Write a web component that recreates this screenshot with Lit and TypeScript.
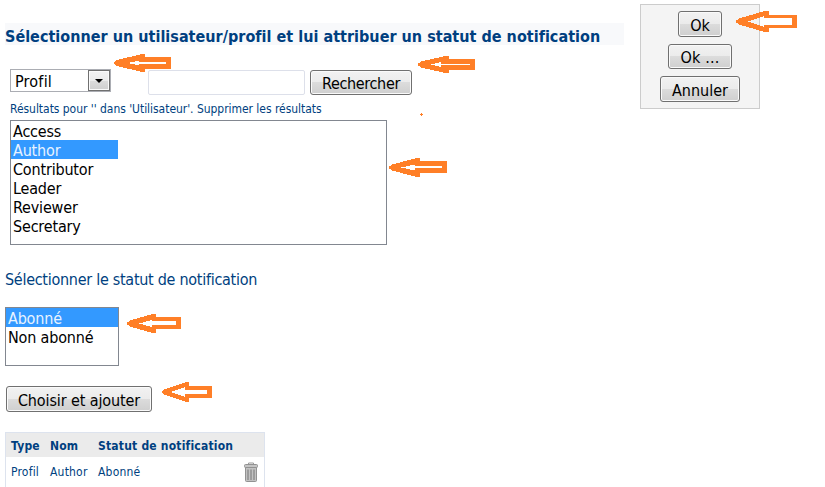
import { LitElement, html, css, svg } from "lit";
import { customElement, property } from "lit/decorators.js";
import { classMap } from "lit/directives/class-map.js";

const uiFont = css`"DejaVu Sans Condensed", "DejaVu Sans", sans-serif`;

@customElement("ui-button")
class UiButton extends LitElement {
  static styles = css`
    :host { display: block; }
    button {
      display: block; box-sizing: border-box; width: 100%; height: 100%; margin: 0; padding: 3px 0 0;
      border: 1px solid #707070; border-radius: 3px; box-shadow: inset 0 0 0 1px #fafafa;
      background: linear-gradient(#f2f2f2 0, #ebebeb 50%, #dcdcdc 50%, #cfcfcf 100%);
      font: 16px/20px ${uiFont}; letter-spacing: inherit; color: #000; white-space: nowrap;
    }
  `;
  render() { return html`<button><slot></slot></button>`; }
}

@customElement("list-box")
class ListBox extends LitElement {
  @property({ attribute: false }) items: string[] = [];
  @property() selected = "";
  static styles = css`
    :host { display: block; box-sizing: border-box; border: 1px solid #828790; background: #fff; }
    .opt { height: 19px; font: 16px/22px ${uiFont}; letter-spacing: -0.18px; padding-left: 2px; color: #000; white-space: nowrap; }
    .on { background: #3399ff; color: #e8f3ff; width: var(--sel-width, auto); }
  `;
  render() {
    return this.items.map((i) => html`<div class=${classMap({ opt: true, on: i === this.selected })}><span>${i}</span></div>`);
  }
}

// tip x, tip y, head x, head right, top, bottom, shaft top, shaft bottom, right,
// inner tip x, inner top, inner bottom, slot top, slot bottom, inner head x
const arrows = [
  [114, 63, 141, 145, 54, 72, 57, 69, 171, 128, 60.5, 65.5, 62, 64, 139],
  [418, 64.5, 444, 449, 56, 73, 59, 70, 475, 431, 62, 67, 64, 65, 441],
  [389, 167.5, 416, 420, 158, 177, 161, 173, 447, 401, 164.5, 170.5, 166, 168, 415],
  [127, 323.5, 152, 156, 314, 333, 317, 329, 181, 139, 320, 327, 321, 325, 152],
  [162, 392, 186, 189, 382, 402, 386, 398, 212, 171, 387, 397, 390, 394, 185],
  [736, 21.5, 764, 769, 11, 32, 15, 28, 797, 748, 16, 27, 18, 25, 764],
];

@customElement("app-root")
class AppRoot extends LitElement {
  static styles = css`
    :host { display: block; position: relative; width: 825px; height: 487px; overflow: hidden; background: #fff; font-family: ${uiFont}; color: #003f80; }
    .page { display: flex; align-items: flex-start; }
    .main { width: 640px; box-sizing: border-box; padding: 23px 0 0 5px; }
    h1 { margin: 0; width: 619px; height: 22px; background: #f8f9fb; font-size: 16px; line-height: 27px; font-weight: bold; letter-spacing: 0.02px; white-space: nowrap; }
    .search { display: flex; margin: 24px 0 0 5px; height: 26px; }
    .select { display: flex; box-sizing: border-box; width: 101px; height: 23px; border: 1px solid #abadb3; color: #000; font-size: 16px; letter-spacing: 0.2px; line-height: 23px; }
    .select span { flex: 1; padding-left: 4px; }
    .drop { box-sizing: border-box; width: 22px; height: 21px; border: 1px solid #707070; box-shadow: inset 0 0 0 1px #fafafa; background: linear-gradient(#f2f2f2 0, #ebebeb 50%, #dcdcdc 50%, #cfcfcf 100%); display: flex; align-items: center; justify-content: center; }
    .drop i { border: 4px solid transparent; border-top-color: #000; border-bottom: 0; }
    input { box-sizing: border-box; width: 157px; height: 25px; margin: 1px 5px 0 37px; border: 1px solid #dde0ea; border-radius: 2px; background: #fff; }
    .b-search { width: 102px; height: 25px; margin-top: 1px; letter-spacing: -0.34px; }
    .result { margin: 7px 0 0 5px; height: 18px; font-size: 12px; line-height: 15px; letter-spacing: -0.04px; white-space: nowrap; }
    .profiles { width: 377px; height: 125px; margin-left: 5px; --sel-width: 105px; }
    .sub { margin-top: 24px; height: 38px; font-size: 16px; line-height: 22px; letter-spacing: -0.28px; white-space: nowrap; }
    .status { width: 114px; height: 59px; }
    .b-add { width: 146px; height: 26px; margin: 20px 0 20px 1px; letter-spacing: -0.11px; }
    .table { box-sizing: border-box; width: 260px; height: 60px; border: 1px solid #dde3ee; font-size: 12px; letter-spacing: 0.2px; }
    .row { display: grid; grid-template-columns: 39px 48px 141px 1fr; padding-left: 5px; height: 28px; line-height: 30px; white-space: nowrap; }
    .head { height: 24px; line-height: 26px; background: #ebebeb; font-weight: bold; }
    .trash { width: 14px; height: 20px; margin: 5px 0 0 5px; }
    .panel { box-sizing: border-box; width: 120px; height: 105px; margin-top: 4px; padding-top: 6px; border: 1px solid #ccc; background: #f4f4f4; display: flex; flex-direction: column; align-items: center; gap: 7px; }
    .b-ok { width: 44px; height: 26px; }
    .b-ok2 { width: 64px; height: 25px; letter-spacing: 0.2px; }
    .b-cancel { width: 80px; height: 26px; }
    .marks { position: absolute; inset: 0; pointer-events: none; }
  `;
  render() {
    return html`
      <div class="page">
        <div class="main">
          <h1>Sélectionner un utilisateur/profil et lui attribuer un statut de notification</h1>
          <div class="search">
            <div class="select"><span>Profil</span><div class="drop"><i></i></div></div>
            <input />
            <ui-button class="b-search">Rechercher</ui-button>
          </div>
          <div class="result">Résultats pour '' dans 'Utilisateur'. Supprimer les résultats</div>
          <list-box class="profiles" .items=${["Access", "Author", "Contributor", "Leader", "Reviewer", "Secretary"]} selected="Author"></list-box>
          <div class="sub">Sélectionner le statut de notification</div>
          <list-box class="status" .items=${["Abonné", "Non abonné"]} selected="Abonné"></list-box>
          <ui-button class="b-add">Choisir et ajouter</ui-button>
          <div class="table">
            <div class="row head"><span>Type</span><span>Nom</span><span>Statut de notification</span></div>
            <div class="row"><span>Profil</span><span>Author</span><span>Abonné</span>
              <svg class="trash" viewBox="0 0 14 20">
                <path d="M4.500 2.500V1h5v1.500" fill="none" stroke="#9a9a9a"/>
                <rect x="0.500" y="2.500" width="13" height="3" rx="1" fill="#c4c4c4" stroke="#929292"/>
                <path d="M1.500 5.500h11v13q0 1-1 1h-9q-1 0-1-1z" fill="#c2c2c2" stroke="#929292"/>
                <path d="M4 7.500V18M7 7.500V18M10 7.500V18" stroke="#7d7d7d" stroke-width="1.100"/>
              </svg>
            </div>
          </div>
        </div>
        <div class="panel">
          <ui-button class="b-ok">Ok</ui-button>
          <ui-button class="b-ok2">Ok ...</ui-button>
          <ui-button class="b-cancel">Annuler</ui-button>
        </div>
      </div>
      <svg class="marks" width="825" height="487" fill="#ff7f27" fill-rule="evenodd" shape-rendering="crispEdges">
        ${arrows.map(([x, y, hx, hr, t, b, st, sb, r, ix, it, ib, s1, s2, ih]) => svg`<path d="M${x} ${y - 1}L${x + 3} ${y - 3}L${hx - 3} ${t + 1}L${hx} ${t}H${hr}V${st}H${r}V${sb}H${hr}V${b}H${hx}L${hx - 3} ${b - 1}L${x + 3} ${y + 3}L${x} ${y + 1}Z M${ix} ${y}L${ih} ${it}V${s1}H${r - 5}V${s2}H${ih}V${ib}Z"/>`)}
        <path d="M421 113h1v1h1v1h-1v1h-1v-1h-1v-1h1z"/>
      </svg>
    `;
  }
}
